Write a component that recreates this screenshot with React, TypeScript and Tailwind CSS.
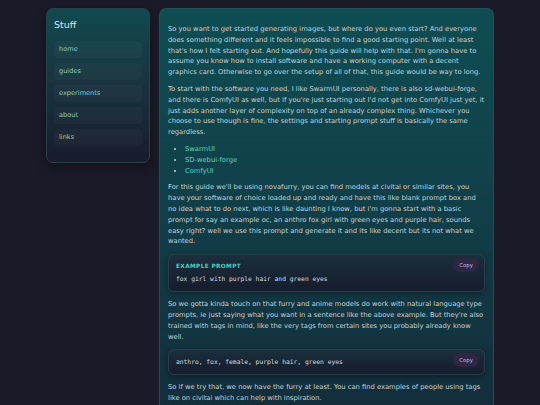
import React from "react";

const navItems = ["home", "guides", "experiments", "about", "links"];

function CodeBlock({ label, code }: { label?: string; code: string }) {
  return (
    <div className="relative my-[7px] rounded-[6px] border border-[#2a3e4a] bg-gradient-to-b from-[#1a2f3c] to-[#161c2c] px-[7px] py-[7px] shadow-[0_2px_6px_rgba(0,0,0,0.35)]">
      {label && (
        <div className="mb-[3px] text-[5.8px] font-bold leading-[9px] tracking-[0.06em] text-[#4fd0bd]">{label}</div>
      )}
      <div className="font-['DejaVu_Sans_Mono',monospace] text-[6.3px] leading-[10px] text-[#d3dbe0]">{code}</div>
      <button className="absolute right-[5px] top-[3px] rounded-full bg-[#2f2644] px-[6px] py-[2.5px] text-[5.4px] leading-[8.5px] text-[#c8bfe0]">
        Copy
      </button>
    </div>
  );
}

export default function App() {
  return (
    <main className="min-h-[405px] w-[540px] overflow-hidden bg-[#1b1a29] font-['DejaVu_Sans',sans-serif]">
      <div className="flex items-start gap-[9px] pl-[46px] pt-[8px]">
        {/* Sidebar */}
        <aside className="w-[104px] rounded-[7px] border border-[#26404a] bg-gradient-to-b from-[#0f4a50] to-[#181c2c] px-[7px] pb-[16px] pt-[9px] shadow-[0_4px_12px_rgba(0,0,0,0.4)]">
          <h1 className="mb-[9px] text-[9.5px] leading-[14px] text-[#dbe7ea]">Stuff</h1>
          <nav className="flex flex-col gap-[5.5px]">
            {navItems.map((item) => (
              <a
                key={item}
                className="block h-[16.5px] rounded-[4px] bg-[#ffffff07] px-[5px] text-[6.6px] leading-[16.5px] text-[#86cbc3]"
              >
                {item}
              </a>
            ))}
          </nav>
        </aside>

        {/* Content */}
        <article className="w-[335px] rounded-t-[7px] border border-b-0 border-[#1f5057] bg-gradient-to-b from-[#0f4d53] via-[#113e48] to-[#132c3a] px-[8px] pb-[20px] pt-[15px] text-[6.75px] leading-[10.8px] text-[#c6d3d7]">
          <p className="mb-[6px]">
            So you want to get started generating images, but where do you even start? And everyone does something different and it feels impossible to find a good starting point. Well at least that's how I felt starting out. And hopefully this guide will help with that. I'm gonna have to assume you know how to install software and have a working computer with a decent graphics card. Otherwise to go over the setup of all of that, this guide would be way to long.
          </p>
          <p className="mb-[6px]">
            To start with the software you need, I like SwarmUI personally, there is also sd-webui-forge, and there is ComfyUI as well, but if you're just starting out I'd not get into ComfyUI just yet, it just adds another layer of complexity on top of an already complex thing. Whichever you choose to use though is fine, the settings and starting prompt stuff is basically the same regardless.
          </p>
          <ul className="mb-[6px] mt-[1px] list-disc pl-[17px] marker:text-[#c6d3d7]">
            <li className="text-[#5fd3c0]">SwarmUI</li>
            <li className="text-[#5fd3c0]">SD-webui-forge</li>
            <li className="text-[#5fd3c0]">ComfyUI</li>
          </ul>
          <p>
            For this guide we'll be using novafurry, you can find models at civitai or similar sites, you have your software of choice loaded up and ready and have this like blank prompt box and no idea what to do next, which is like daunting I know, but i'm gonna start with a basic prompt for say an example oc, an anthro fox girl with green eyes and purple hair, sounds easy right? well we use this prompt and generate it and its like decent but its not what we wanted.
          </p>
          <CodeBlock label="EXAMPLE PROMPT" code="fox girl with purple hair and green eyes" />
          <p>
            So we gotta kinda touch on that furry and anime models do work with natural language type prompts, ie just saying what you want in a sentence like the above example. But they're also trained with tags in mind, like the very tags from certain sites you probably already know well.
          </p>
          <CodeBlock code="anthro, fox, female, purple hair, green eyes" />
          <p>
            So if we try that, we now have the furry at least. You can find examples of people using tags like on civitai which can help with inspiration.
          </p>
        </article>
      </div>
    </main>
  );
}
